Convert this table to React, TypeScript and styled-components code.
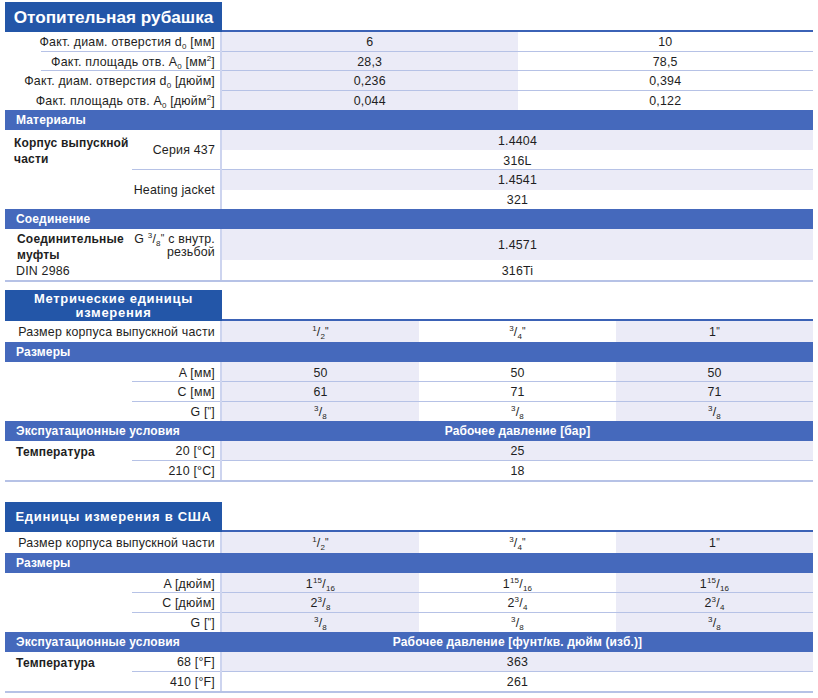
import React from 'react';
import styled, { createGlobalStyle } from 'styled-components';

const C = {
  title: '#2356a8',
  bar: '#4569bc',
  lav: '#ebebf7',
  line: '#b6c2e6',
  strong: '#3b62b6',
  vline: '#cdd4ef',
  text: '#1e1e22',
};

const Global = createGlobalStyle`
  html, body { margin: 0; padding: 0; background: #ffffff; }
  body {
    font-family: "Liberation Sans", Arial, Helvetica, sans-serif;
    color: ${C.text};
    -webkit-font-smoothing: antialiased;
  }
`;

const Page = styled.main`
  width: 808px;
  margin-left: 5px;
  padding-top: 2px;
  display: flex;
  flex-direction: column;
`;

const Block = styled.section<{ $gap: number }>`
  display: flex;
  flex-direction: column;
  margin-bottom: ${(p) => p.$gap}px;
`;

const TitleRow = styled.div`
  display: flex;
  align-items: stretch;
`;

const TitleBox = styled.h2<{ $h: number; $size: number; $ls: number }>`
  margin: 0;
  width: 217px;
  height: ${(p) => p.$h}px;
  background: ${C.title};
  color: #ffffff;
  font-weight: 700;
  font-size: ${(p) => p.$size}px;
  letter-spacing: ${(p) => p.$ls}px;
  line-height: 14px;
  display: flex;
  align-items: center;
  justify-content: center;
  text-align: center;
`;

const TitleRule = styled.div`
  flex: 1;
  border-bottom: 2px solid ${C.strong};
`;

const Bar = styled.div`
  display: grid;
  grid-template-columns: 217px 1fr;
  height: 20px;
  align-items: center;
  background: ${C.bar};
  color: #ffffff;
  font-weight: 700;
  font-size: 12px;
  letter-spacing: 0.15px;
`;

const BarTitle = styled.div`
  padding-left: 11px;
  white-space: nowrap;
`;

const BarSub = styled.div`
  text-align: center;
  white-space: nowrap;
`;

const Grid = styled.div<{ $cols: number; $rows: string; $closed?: boolean }>`
  display: grid;
  grid-template-columns: 127px 90px repeat(${(p) => p.$cols}, 1fr);
  grid-template-rows: ${(p) => p.$rows};
  ${(p) => (p.$closed ? `border-bottom: 2px solid ${C.line};` : '')}
`;

const Cell = styled.div`
  display: flex;
  align-items: center;
  padding-top: 1px;
  font-size: 12.4px;
  line-height: 14px;
  letter-spacing: 0.2px;
  min-width: 0;
  white-space: nowrap;
`;

const FullLabel = styled(Cell)<{ $line?: number; $left?: boolean }>`
  grid-column: 1 / 3;
  justify-content: ${(p) => (p.$left ? 'flex-start' : 'flex-end')};
  padding-left: ${(p) => (p.$left ? '11px' : '0')};
  padding-right: ${(p) => (p.$left ? '0' : '5px')};
  border-right: 2px solid ${C.vline};
  ${(p) =>
    p.$line !== undefined
      ? `background: linear-gradient(${C.line}, ${C.line}) no-repeat right bottom / calc(100% - ${p.$line}px) 1px;`
      : ''}
`;

const MainLabel = styled(Cell)<{ $span: number; $pad: number; $indent: number }>`
  grid-column: 1;
  grid-row: span ${(p) => p.$span};
  align-items: flex-start;
  padding: ${(p) => p.$pad}px 0 0 ${(p) => p.$indent}px;
  font-size: 12px;
  font-weight: 700;
  white-space: normal;
  line-height: 16px;
`;

const SubLabel = styled(Cell)<{ $span?: number; $line?: boolean }>`
  grid-column: 2;
  grid-row: span ${(p) => p.$span ?? 1};
  justify-content: flex-end;
  text-align: right;
  padding-right: 5px;
  border-right: 2px solid ${C.vline};
  white-space: normal;
  line-height: 13px;
  ${(p) => (p.$line ? `box-shadow: inset 0 -1px 0 ${C.line};` : '')}
`;

const Value = styled(Cell)<{ $alt?: boolean; $line?: boolean; $merged?: boolean }>`
  justify-content: center;
  background: ${(p) => (p.$alt ? C.lav : '#ffffff')};
  ${(p) => (p.$line ? `box-shadow: inset 0 -1px 0 ${C.line};` : '')}
  ${(p) => (p.$merged ? 'grid-column: 3 / -1;' : '')}
`;

const Sub = styled.sub`
  font-size: 8px;
  line-height: 0;
  vertical-align: -3px;
`;

const Sup = styled.sup`
  font-size: 8px;
  line-height: 0;
  vertical-align: 5px;
`;

const Inch = styled.span`
  font-size: 10px;
  vertical-align: 1px;
`;

const Frac = ({ w, n, d, inch }: { w?: string; n: string; d: string; inch?: boolean }) => (
  <span>
    {w}
    <Sup>{n}</Sup>/<Sub>{d}</Sub>
    {inch && <Inch>"</Inch>}
  </span>
);

type V = React.ReactNode;

const Row = ({ label, line, values, vline }: { label: V; line?: number; values: V[]; vline?: boolean }) => (
  <>
    <FullLabel $line={line}>{label}</FullLabel>
    {values.map((v, i) => (
      <Value key={i} $alt={i % 2 === 0} $line={vline}>
        {v}
      </Value>
    ))}
  </>
);

const Title = ({ children, h, size, ls }: { children: V; h: number; size: number; ls: number }) => (
  <TitleRow>
    <TitleBox $h={h} $size={size} $ls={ls}>
      {children}
    </TitleBox>
    <TitleRule />
  </TitleRow>
);

const SizeBlock = ({
  title,
  twoLine,
  sizes,
  unit,
  a,
  c,
  pressure,
  temps,
  gap,
}: {
  title: V;
  twoLine?: boolean;
  sizes: V[];
  unit: string;
  a: V[];
  c: V[];
  pressure: string;
  temps: [string, string][];
  gap: number;
}) => (
  <Block $gap={gap}>
    <Title h={twoLine ? 31 : 30} size={13} ls={0.7}>
      {title}
    </Title>
    <Grid $cols={3} $rows="21px">
      <Row label="Размер корпуса выпускной части" values={sizes} />
    </Grid>
    <Bar>
      <BarTitle>Размеры</BarTitle>
    </Bar>
    <Grid $cols={3} $rows="repeat(3, 19.6px)">
      <Row label={`A [${unit}]`} line={127} values={a} vline />
      <Row label={`C [${unit}]`} line={127} values={c} vline />
      <Row
        label={
          <span>
            G [<Inch>"</Inch>]
          </span>
        }
        values={[0, 1, 2].map((k) => (
          <Frac key={k} n="3" d="8" />
        ))}
      />
    </Grid>
    <Bar>
      <BarTitle>Экспуатационные условия</BarTitle>
      <BarSub>{pressure}</BarSub>
    </Bar>
    <Grid $cols={3} $rows="repeat(2, 19.6px)" $closed>
      <MainLabel $span={2} $pad={3} $indent={11}>
        Температура
      </MainLabel>
      {temps.map(([t, p], i) => (
        <React.Fragment key={t}>
          <SubLabel $line={i === 0}>{t}</SubLabel>
          <Value $merged $alt={i === 0} $line={i === 0}>
            {p}
          </Value>
        </React.Fragment>
      ))}
    </Grid>
  </Block>
);

const sizeValues = () => [
  <Frac key="a" n="1" d="2" inch />,
  <Frac key="b" n="3" d="4" inch />,
  <span key="c">
    1<Inch>"</Inch>
  </span>,
];

export default function App() {
  return (
    <>
      <Global />
      <Page>
        <Block $gap={8}>
          <Title h={30} size={17.2} ls={0}>
            Отопительная рубашка
          </Title>
          <Grid $cols={2} $rows="repeat(4, 19.6px)">
            <Row
              label={
                <span>
                  Факт. диам. отверстия d<Sub>0</Sub> [мм]
                </span>
              }
              line={36}
              values={['6', '10']}
              vline
            />
            <Row
              label={
                <span>
                  Факт. площадь отв. A<Sub>0</Sub> [мм<Sup>2</Sup>]
                </span>
              }
              line={36}
              values={['28,3', '78,5']}
              vline
            />
            <Row
              label={
                <span>
                  Факт. диам. отверстия d<Sub>0</Sub> [дюйм]
                </span>
              }
              values={['0,236', '0,394']}
              vline
            />
            <Row
              label={
                <span>
                  Факт. площадь отв. A<Sub>0</Sub> [дюйм<Sup>2</Sup>]
                </span>
              }
              values={['0,044', '0,122']}
            />
          </Grid>
          <Bar>
            <BarTitle>Материалы</BarTitle>
          </Bar>
          <Grid $cols={1} $rows="repeat(4, 19.75px)">
            <MainLabel $span={4} $pad={5} $indent={9}>
              Корпус выпускной части
            </MainLabel>
            <SubLabel $span={2} $line>
              Серия 437
            </SubLabel>
            <Value $merged $alt>
              1.4404
            </Value>
            <Value $merged $line>
              316L
            </Value>
            <SubLabel $span={2}>Heating jacket</SubLabel>
            <Value $merged $alt>
              1.4541
            </Value>
            <Value $merged>321</Value>
          </Grid>
          <Bar>
            <BarTitle>Соединение</BarTitle>
          </Bar>
          <Grid $cols={1} $rows="31px 20px" $closed>
            <MainLabel $span={1} $pad={2} $indent={12}>
              Соединительные муфты
            </MainLabel>
            <SubLabel>
              <span>
                G <Frac n="3" d="8" inch /> с внутр. резьбой
              </span>
            </SubLabel>
            <Value $merged $alt>
              1.4571
            </Value>
            <FullLabel $left>DIN 2986</FullLabel>
            <Value $merged>316Ti</Value>
          </Grid>
        </Block>

        <SizeBlock
          gap={20}
          twoLine
          title={
            <span>
              Метрические единицы
              <br />
              измерения
            </span>
          }
          sizes={sizeValues()}
          unit="мм"
          a={['50', '50', '50']}
          c={['61', '71', '71']}
          pressure="Рабочее давление [бар]"
          temps={[
            ['20 [°C]', '25'],
            ['210 [°C]', '18'],
          ]}
        />

        <SizeBlock
          gap={0}
          title="Единицы измерения в США"
          sizes={sizeValues()}
          unit="дюйм"
          a={[0, 1, 2].map((k) => (
            <Frac key={k} w="1" n="15" d="16" />
          ))}
          c={[
            <Frac key="a" w="2" n="3" d="8" />,
            <Frac key="b" w="2" n="3" d="4" />,
            <Frac key="c" w="2" n="3" d="4" />,
          ]}
          pressure="Рабочее давление [фунт/кв. дюйм (изб.)]"
          temps={[
            ['68 [°F]', '363'],
            ['410 [°F]', '261'],
          ]}
        />
      </Page>
    </>
  );
}
